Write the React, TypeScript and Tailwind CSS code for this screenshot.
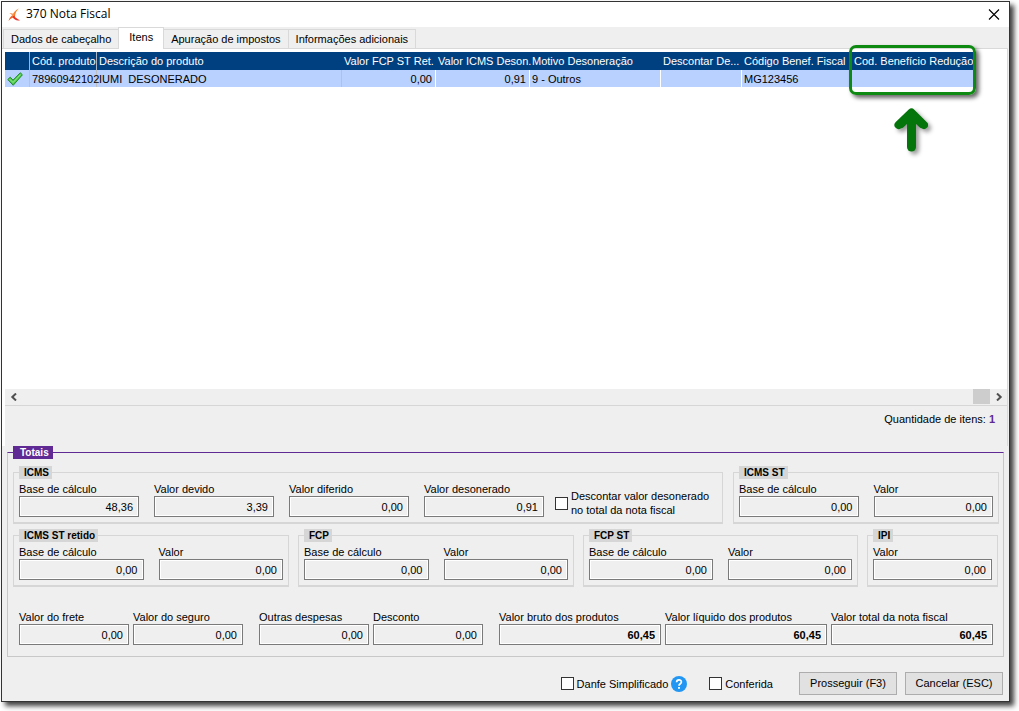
import React, { useId } from "react";

function Field({ label, value, bold = false }: { label: string; value: string; bold?: boolean }) {
  const id = useId();
  return (
    <div className="min-w-0 flex-1">
      <label htmlFor={id} className="block h-[14px] leading-[14px] whitespace-nowrap">
        {label}
      </label>
      <input
        id={id}
        readOnly
        defaultValue={value}
        className={
          "block h-[21px] w-full border border-[#7a7a7a] bg-[#efefef] pr-[5px] text-right outline-none inset-ring inset-ring-white " +
          (bold ? "font-bold" : "")
        }
      />
    </div>
  );
}

function Group({ title, children }: { title: string; children: React.ReactNode }) {
  return (
    <fieldset className="min-w-0 border border-b-2 border-[#d6d6d6] px-[5px] pb-[5px]">
      <legend className="h-[13px] bg-[#d6d6d6] pr-[3px] pl-[5px] text-[10px] leading-[13px] font-bold">{title}</legend>
      <div className="flex gap-[15px] pt-[3px]">{children}</div>
    </fieldset>
  );
}

function Check({ children }: { children: React.ReactNode }) {
  const id = useId();
  return (
    <div className="flex items-center gap-[3px]">
      <input id={id} type="checkbox" className="h-[13px] w-[13px] shrink-0 appearance-none border border-[#333] bg-white" />
      <label htmlFor={id} className="leading-[14px] whitespace-nowrap">
        {children}
      </label>
    </div>
  );
}

const tabs = ["Dados de cabeçalho", "Itens", "Apuração de impostos", "Informações adicionais"];

const columns = [
  { title: "Cód. produto", value: "78960942102", right: false },
  { title: "Descrição do produto", value: "IUMI  DESONERADO", right: false },
  { title: "Valor FCP ST Ret.", value: "0,00", right: true },
  { title: "Valor ICMS Deson.", value: "0,91", right: true },
  { title: "Motivo Desoneração", value: "9 - Outros", right: false },
  { title: "Descontar De...", value: "", right: false },
  { title: "Código Benef. Fiscal", value: "MG123456", right: false },
];

function Highlight() {
  return (
    <div className="pointer-events-none absolute -top-[7px] -right-[2px] -left-[2px]">
      <div className="h-[50px] rounded-[7px] border-3 border-[#0e8a12] shadow-[3px_3px_4px_rgba(0,0,0,0.6)]" />
      <svg
        viewBox="0 0 44 52"
        className="mx-auto mt-[9px] h-[52px] w-[44px] drop-shadow-[3px_3px_2px_rgba(0,0,0,0.4)]"
        fill="none"
        stroke="#04750a"
        strokeLinecap="round"
        strokeLinejoin="round"
      >
        <path d="M7.5 21 L20.5 8.5 L33 21" strokeWidth="8" />
        <path d="M10 20 L20.5 10 L31 20" strokeWidth="8" />
        <path d="M20.5 11 V43" strokeWidth="9" />
      </svg>
    </div>
  );
}

export default function App() {
  return (
    <div className="flex min-h-screen bg-white pt-px pr-[9px] pb-[9px] pl-px font-['Liberation_Sans',Arial,sans-serif] text-[11px] text-black">
      <main className="flex min-w-0 flex-1 flex-col border border-[#333] bg-[#efefef] shadow-[4px_4px_5px_rgba(0,0,0,0.75)]">
        <header className="flex h-[25px] items-center bg-white pr-[9px] pl-[5px]">
          <svg viewBox="0 0 14 14" className="h-[14px] w-[14px]">
            <path d="M12 0.5 C8.5 2 6.3 4.5 5.2 8 L8 9 C8 5.5 9.3 2.8 12 0.5Z" fill="#f7852c" />
            <path d="M1.5 13 C2.3 9.8 4 7.6 7 6.2 L8.2 9 C5.6 9.4 3.4 10.8 1.5 13Z" fill="#f0662a" />
            <path d="M6.8 7.6 C8.3 9.6 10 11 13 12.2 C10 13 7 11.8 5.6 9Z" fill="#e5352a" />
            <path d="M2.4 5 C4.2 4.6 6.2 5.4 7.4 7 L5.6 8.4 C5 6.8 4 5.8 2.4 5Z" fill="#f79a5b" />
          </svg>
          <h1 className="ml-[5px] flex-1 pb-[2px] font-['Open_Sans',sans-serif] text-[12px] leading-[16px]">370 Nota Fiscal</h1>
          <button aria-label="Fechar" className="flex h-[12px] w-[12px] items-center justify-center">
            <svg viewBox="0 0 12 12" className="h-[12px] w-[12px]" stroke="#000" strokeWidth="1.1">
              <path d="M1 0.5 L11 10.5 M11 0.5 L1 10.5" />
            </svg>
          </button>
        </header>

        <nav role="tablist" className="flex h-[21px] items-end pl-px">
          {tabs.map((t) =>
            t === "Itens" ? (
              <button
                key={t}
                role="tab"
                aria-selected="true"
                className="z-10 -mb-px h-[22px] border-x border-t border-[#d9d9d9] bg-white px-[10px] pb-[2px]"
              >
                {t}
              </button>
            ) : (
              <button
                key={t}
                role="tab"
                aria-selected="false"
                className="h-[19px] border-t border-r border-[#d9d9d9] px-[7px] first:border-l first:border-r-0"
              >
                {t}
              </button>
            ),
          )}
        </nav>

        <section className="mr-px flex flex-1 flex-col border-t border-r border-[#d9d9d9] bg-white pt-[3px] pl-[3px]">
          <div className="min-h-[120px] flex-1">
            <table className="w-[969px] table-fixed border-collapse">
              <colgroup>
                <col className="w-[24px]" />
                <col className="w-[67px]" />
                <col className="w-[245px]" />
                <col className="w-[94px]" />
                <col className="w-[94px]" />
                <col className="w-[131px]" />
                <col className="w-[81px]" />
                <col className="w-[110px]" />
                <col className="w-[123px]" />
              </colgroup>
              <thead>
                <tr className="h-[18px] bg-[#004080] text-white">
                  <th className="p-0" aria-label="Situação" />
                  {columns.map((c, i) => (
                    <th
                      key={c.title}
                      className={
                        "p-0 pl-[3px] text-left font-normal whitespace-nowrap " +
                        (i < 2 ? "shadow-[inset_1px_0_#a8b4c4]" : "")
                      }
                    >
                      {c.title}
                    </th>
                  ))}
                  <th className="relative p-0 pl-[3px] text-left font-normal whitespace-nowrap">
                    Cod. Benefício Redução
                    <Highlight />
                  </th>
                </tr>
              </thead>
              <tbody>
                <tr className="h-[17px] bg-[#b9d1ff]">
                  <td className="p-0">
                    <svg viewBox="0 0 16 14" className="ml-[2px] h-[14px] w-[16px]">
                      <path d="M0.8 7.5 L3.2 5.2 L6 8.2 L13.3 0.8 L15.4 2.8 L6.2 13.3 Z" fill="#4cc84a" stroke="#218a2b" strokeLinejoin="round" />
                      <path d="M2.6 7.1 L6 10.5 L13.6 2.6" fill="none" stroke="#9cec94" strokeWidth="1" />
                    </svg>
                  </td>
                  {columns.map((c, i) => (
                    <td
                      key={c.title}
                      className={
                        "p-0 pt-[2px] pl-[3px] leading-[15px] whitespace-pre " +
                        (i < 3 ? "shadow-[inset_1px_0_#c0c0c0] " : "shadow-[inset_1px_0_#ffffff] ") +
                        (c.right ? "pr-[3px] text-right" : "text-left")
                      }
                    >
                      {c.value}
                    </td>
                  ))}
                  <td className="p-0 shadow-[inset_1px_0_#ffffff]" />
                </tr>
              </tbody>
            </table>
          </div>

          <div className="flex h-[17px] items-stretch border-b border-[#d6d6d6] bg-[#efefef]">
            <button aria-label="Rolar para a esquerda" className="flex w-[17px] items-center justify-center">
              <svg viewBox="0 0 8 8" className="h-[8px] w-[8px]" fill="none" stroke="#505050" strokeWidth="2">
                <path d="M6 0.5 L2.3 4 L6 7.5" />
              </svg>
            </button>
            <div className="flex flex-1 justify-end">
              <div className="mb-px w-[17px] bg-[#cdcdcd]" />
            </div>
            <button aria-label="Rolar para a direita" className="flex w-[17px] items-center justify-center">
              <svg viewBox="0 0 8 8" className="h-[8px] w-[8px]" fill="none" stroke="#505050" strokeWidth="2">
                <path d="M2 0.5 L5.7 4 L2 7.5" />
              </svg>
            </button>
          </div>
          <p className="h-[40px] bg-[#efefef] pt-[6px] pr-[12px] text-right leading-[14px]">
            Quantidade de itens: <b className="text-[#5f2a94]">1</b>
          </p>
        </section>

        <fieldset className="mr-[5px] ml-[5px] min-w-0 border border-x-[#c8c8c8] border-t-[#5f2a94] border-b-[#c8c8c8] pr-[4px] pb-[11px] pl-[5px]">
          <legend className="h-[13px] bg-[#5f2a94] pr-[4px] pl-[7px] text-[10px] leading-[13px] font-bold text-white">Totais</legend>
          <div className="grid grid-cols-[710fr_266fr] gap-[10px] pt-[7px]">
            <Group title="ICMS">
              <div className="flex flex-[525] gap-[15px]">
                <Field label="Base de cálculo" value="48,36" />
                <Field label="Valor devido" value="3,39" />
                <Field label="Valor diferido" value="0,00" />
                <Field label="Valor desonerado" value="0,91" />
              </div>
              <div className="-ml-[4px] flex-[162] pt-[7px]">
                <Check>
                  Descontar valor desonerado
                  <br />
                  no total da nota fiscal
                </Check>
              </div>
            </Group>
            <Group title="ICMS ST">
              <Field label="Base de cálculo" value="0,00" />
              <Field label="Valor" value="0,00" />
            </Group>
          </div>
          <div className="mt-[5px] mr-px grid grid-cols-[276fr_276fr_275fr_131fr] gap-[9px]">
            <Group title="ICMS ST retido">
              <Field label="Base de cálculo" value="0,00" />
              <Field label="Valor" value="0,00" />
            </Group>
            <Group title="FCP">
              <Field label="Base de cálculo" value="0,00" />
              <Field label="Valor" value="0,00" />
            </Group>
            <Group title="FCP ST">
              <Field label="Base de cálculo" value="0,00" />
              <Field label="Valor" value="0,00" />
            </Group>
            <Group title="IPI">
              <Field label="Valor" value="0,00" />
            </Group>
          </div>
          <div className="mt-[23px] grid grid-cols-[224fr_224fr_494fr] gap-[16px] pr-[6px] pl-[6px]">
            <div className="flex gap-[4px]">
              <Field label="Valor do frete" value="0,00" />
              <Field label="Valor do seguro" value="0,00" />
            </div>
            <div className="flex gap-[4px]">
              <Field label="Outras despesas" value="0,00" />
              <Field label="Desconto" value="0,00" />
            </div>
            <div className="flex gap-[4px]">
              <Field label="Valor bruto dos produtos" value="60,45" bold />
              <Field label="Valor líquido dos produtos" value="60,45" bold />
              <Field label="Valor total da nota fiscal" value="60,45" bold />
            </div>
          </div>
        </fieldset>

        <footer className="flex items-center justify-end pt-[15px] pr-[6px] pb-[6px]">
          <Check>Danfe Simplificado</Check>
          <button aria-label="Ajuda" className="ml-[3px] h-[16px] w-[16px]">
            <svg viewBox="0 0 16 16" className="h-[16px] w-[16px]">
              <circle cx="8" cy="8" r="8" fill="#2196f3" />
              <path d="M5.6 6.3 C5.6 3 10.4 3 10.4 6.1 C10.4 7.8 8 7.8 8 9.8" fill="none" stroke="#fff" strokeWidth="1.7" />
              <rect x="7.1" y="11" width="1.8" height="1.8" fill="#fff" />
            </svg>
          </button>
          <div className="ml-[22px]">
            <Check>Conferida</Check>
          </div>
          <button className="ml-[26px] h-[23px] w-[98px] border border-[#adadad] bg-[#e1e1e1]">Prosseguir (F3)</button>
          <button className="ml-[8px] h-[23px] w-[98px] border border-[#adadad] bg-[#e1e1e1]">Cancelar (ESC)</button>
        </footer>
      </main>
    </div>
  );
}
